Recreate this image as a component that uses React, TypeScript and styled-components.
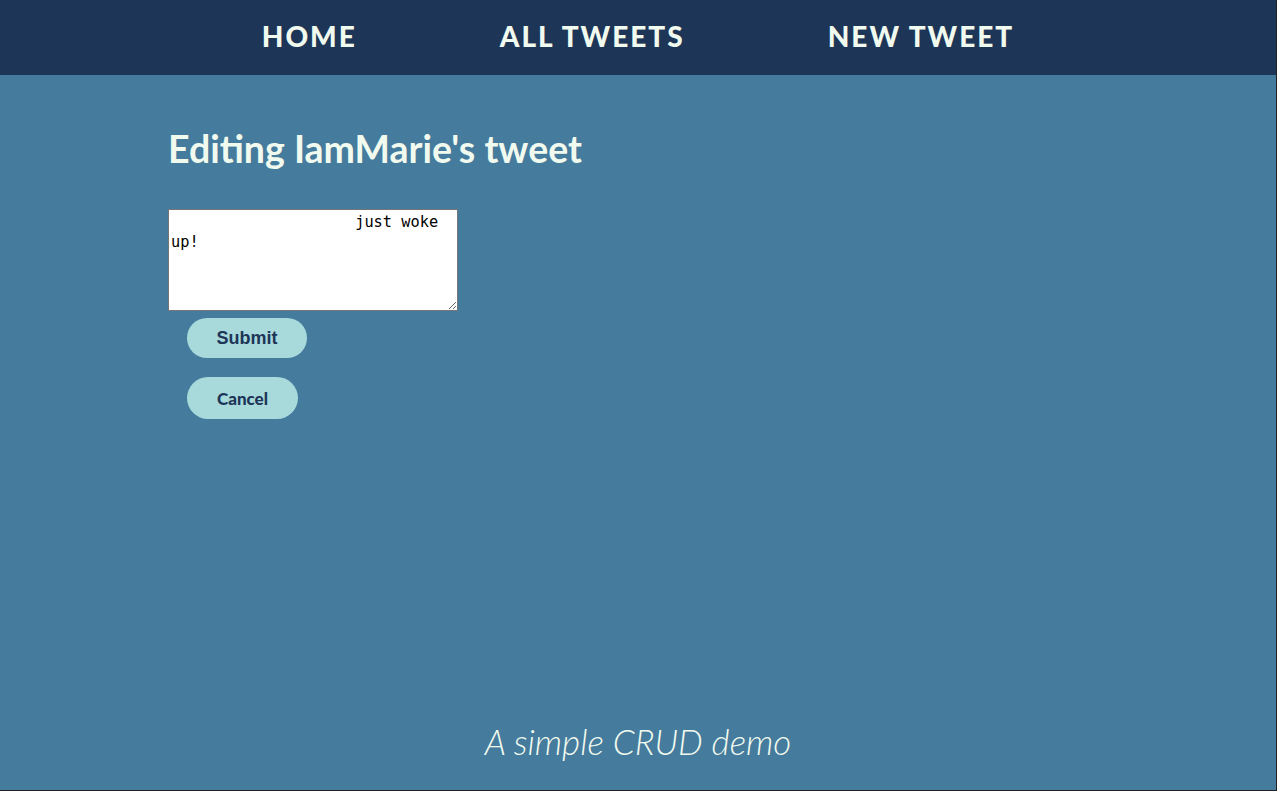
import React from "react";
import styled, { createGlobalStyle } from "styled-components";

const Global = createGlobalStyle`
  html, body { margin: 0; padding: 0; }
  body { background: #457b9d; font-family: Lato, "Noto Sans", sans-serif; }
  * { box-sizing: border-box; }
`;

const Page = styled.div`
  height: 100vh;
  display: flex;
  flex-direction: column;
  background: #457b9d;
  border-right: 1px solid #222;
  border-bottom: 1px solid #222;
`;

const NavBar = styled.nav`
  height: 75px;
  flex: none;
  background: #1d3557;
  display: flex;
  align-items: center;
  justify-content: center;
  gap: 143px;
`;

const NavLink = styled.a`
  color: #f1faee;
  font-family: Lato, sans-serif;
  font-weight: 900;
  font-size: 28px;
  letter-spacing: 2px;
  text-decoration: none;
  padding-bottom: 3px;
`;

const Main = styled.main`
  flex: 1;
  width: 940px;
  margin: 0 auto;
  padding-top: 53px;
`;

const Title = styled.h1`
  margin: 0 0 39px 0;
  color: #f1faee;
  font-family: Lato, sans-serif;
  font-weight: 700;
  font-size: 37.5px;
  line-height: 42px;
`;

const Form = styled.form`
  display: flex;
  flex-direction: column;
  align-items: flex-start;
`;

const TextArea = styled.textarea`
  width: 290px;
  height: 102px;
  font-family: "DejaVu Sans Mono", monospace;
  font-size: 15.3px;
  line-height: 20px;
  padding: 2px;
  border: 1px solid #767676;
  background: #fff;
  color: #000;
  margin: 0;
  resize: both;
  overflow: hidden;
`;

const Button = styled.button<{ $alt?: boolean }>`
  margin: ${(p) => (p.$alt ? "19px 0 0 19px" : "7px 0 0 19px")};
  height: ${(p) => (p.$alt ? "42px" : "40px")};
  width: ${(p) => (p.$alt ? "111px" : "120px")};
  border: none;
  border-radius: 21px;
  background: #a8dadc;
  color: #1d3557;
  font-family: ${(p) => (p.$alt ? "Lato, sans-serif" : "'Liberation Sans', Arial, sans-serif")};
  font-weight: ${(p) => (p.$alt ? 900 : 700)};
  font-size: ${(p) => (p.$alt ? "17px" : "18px")};
  cursor: pointer;
`;

const Footer = styled.footer`
  flex: none;
  height: 90px;
  display: flex;
  justify-content: center;
  padding-top: 20px;
  color: #f1faee;
  font-family: Lato, sans-serif;
  font-style: italic;
  font-weight: 300;
  font-size: 35px;
`;

const value = " ".repeat(20) + "just woke up!";

export default function App() {
  return (
    <>
      <Global />
      <Page>
        <NavBar>
          <NavLink href="#">HOME</NavLink>
          <NavLink href="#">ALL TWEETS</NavLink>
          <NavLink href="#">NEW TWEET</NavLink>
        </NavBar>
        <Main>
          <Title>Editing IamMarie's tweet</Title>
          <Form onSubmit={(e) => e.preventDefault()}>
            <TextArea defaultValue={value} />
            <Button type="submit">Submit</Button>
            <Button type="button" $alt>
              Cancel
            </Button>
          </Form>
        </Main>
        <Footer>A simple CRUD demo</Footer>
      </Page>
    </>
  );
}
